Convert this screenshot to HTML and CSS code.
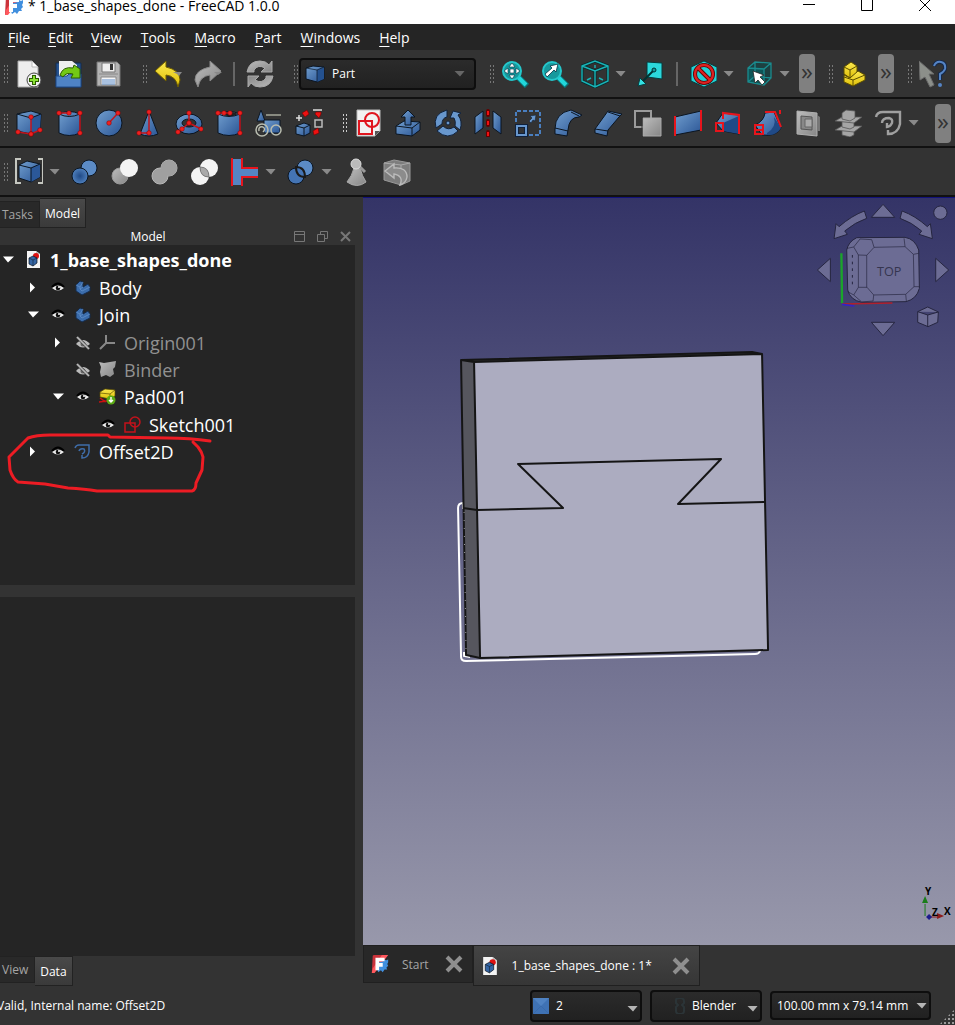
FILE: index.html
```html
<!DOCTYPE html>
<html lang="en">
<head>
    <meta charset="UTF-8">
    <meta name="viewport" content="width=device-width, initial-scale=1.0">
    <title>1_base_shapes_done - FreeCAD 1.0.0</title>
    <link rel="stylesheet" href="styles.css">
</head>
<body>
    <!-- shared gradients, markers and symbols -->
    <svg class="defs" width="0" height="0" aria-hidden="true">
        <defs>
            <linearGradient id="blue" x1="0" y1="0" x2="1" y2="1"><stop offset="0" stop-color="#729fcf"/><stop offset="1" stop-color="#2a5595"/></linearGradient>
            <linearGradient id="grey" x1="0" y1="0" x2="1" y2="1"><stop offset="0" stop-color="#bdbdbd"/><stop offset="1" stop-color="#868686"/></linearGradient>
            <radialGradient id="ball"><stop offset="0" stop-color="#204a87"/><stop offset="1" stop-color="#4f80bd"/></radialGradient>
            <linearGradient id="yellow" x1="0" y1="0" x2="0" y2="1"><stop offset="0" stop-color="#fce94f"/><stop offset="1" stop-color="#dfc009"/></linearGradient>
            <marker id="dot" markerUnits="userSpaceOnUse" markerWidth="6" markerHeight="6" refX="3" refY="3"><circle cx="3" cy="3" r="2.3" fill="#ef2020" stroke="#7a0000" stroke-width=".5"/></marker>
            <symbol id="logo" viewBox="0 0 20 22">
                <path d="M2 2Q2 1 4 1H18L15 6 4 20 1 21Z" fill="#cb333b"/>
                <path d="M12 1H19L4 21H1L2 16Z" fill="#ff585d"/>
                <path d="M9 9L14 8 15 6 17 7 19 6V9L18 11 19 13 17 15 18 17 15 17 13 20 11 18 8 20 7 17Z" fill="#418fde"/>
                <path d="M5 4H15V8H9V10H13V14H9V18H5Z" fill="#fff"/>
            </symbol>
            <symbol id="doc" viewBox="0 0 17 19">
                <path d="M2 1H11L15 4V18H2Z" fill="#f4f4f4"/><path d="M11 1V4H15Z" fill="#bbb"/>
                <circle cx="11" cy="6" r="3" fill="#d11"/><path d="M4 8L8 6 12 8V13L8 16 4 14Z" fill="#3465a4" stroke="#0b1521" stroke-width=".7"/><path d="M4 8L8 10 12 8M8 10V16" fill="none" stroke="#0b1521" stroke-width=".5"/>
            </symbol>
            <symbol id="eye" viewBox="0 0 16 14">
                <path d="M2 6Q8-1 14 6" fill="none" stroke="#000" stroke-width="2"/><path d="M2 7Q8 2 14 7 8 12 2 7Z" fill="#eee"/><circle cx="8" cy="7" r="2.3" fill="#111"/><circle cx="9" cy="6" r="1" fill="#fff"/>
            </symbol>
            <symbol id="eyeOff" viewBox="0 0 16 14">
                <path d="M1 8Q8 0 15 8 8 15 1 8Z" fill="#bbb"/><circle cx="8" cy="8" r="2.5" fill="#666"/><path d="M2 1L14 13" stroke="#444" stroke-width="3"/><path d="M2 1L14 13" stroke="#bbb" stroke-width="1.7"/>
            </symbol>
            <symbol id="body" viewBox="0 0 17 17">
                <path d="M2 6L6 2 9 3V8L14 5 16 8V12L8 16 2 12Z" fill="#3b6cab" stroke="#152c4c"/><path d="M2 6L6 8V10L9 8M6 10L8 12 16 8M6 8L9 3" fill="none" stroke="#6594cc" stroke-width=".7"/>
            </symbol>
            <symbol id="cross" viewBox="0 0 18 18"><path d="M2 2L16 16M16 2L2 16" stroke="#8f8f8f" stroke-width="4"/></symbol>
        </defs>
    </svg>

    <header class="titlebar">
        <svg class="app-logo" viewBox="0 6 20 16"><use href="#logo" width="20" height="22"/></svg>
        <span class="app-title">* 1_base_shapes_done - FreeCAD 1.0.0</span>
        <button class="win-btn" aria-label="Minimize"><svg viewBox="0 0 12 12"><path d="M0 4.5H12"/></svg></button>
        <button class="win-btn" aria-label="Maximize"><svg viewBox="0 0 12 12"><path d="M.5-1V10.5H11.5V-1"/></svg></button>
        <button class="win-btn" aria-label="Close"><svg viewBox="0 0 12 12"><path d="M0-1L12 11M12-1L0 11"/></svg></button>
    </header>

    <nav class="menubar">
        <a href="#"><u>F</u>ile</a>
        <a href="#"><u>E</u>dit</a>
        <a href="#"><u>V</u>iew</a>
        <a href="#"><u>T</u>ools</a>
        <a href="#"><u>M</u>acro</a>
        <a href="#"><u>P</u>art</a>
        <a href="#"><u>W</u>indows</a>
        <a href="#"><u>H</u>elp</a>
    </nav>

    <!-- file, workbench, view -->
    <div class="toolbar">
        <div class="group">
            <i class="grip"></i>
            <button class="tool" aria-label="New"><svg viewBox="0 0 28 28"><path d="M3 1H17L23 7V27H3Z" fill="#eee" stroke="#aaa"/><path d="M17 1V7H23Z" fill="#fff" stroke="#bbb"/><circle cx="19" cy="20" r="7" fill="#eee" stroke="#444"/><path d="M19 15V25M14 20H24" stroke="#2b5c00" stroke-width="4"/><path d="M19 16V24M15 20H23" stroke="#8ae234" stroke-width="2"/></svg></button>
            <button class="tool" aria-label="Open"><svg viewBox="0 0 28 28"><path d="M1 3H26V27H1Z" fill="#24518f" stroke="#152c4c"/><path d="M4 1H17L22 5V18H4Z" fill="#eee"/><path d="M1 16H12L14 14H26V27H1Z" fill="#4f83c4" stroke="#204a87"/><path d="M5 15Q8 6 18 8L19 5 25 9V18H16L18 14Q11 12 8 17Z" fill="#73c916" stroke="#2b5c00"/></svg></button>
            <button class="tool" aria-label="Save"><svg viewBox="0 0 28 28"><path d="M2 2H22L25 5V26H2Z" fill="#b4b4b4" stroke="#777"/><path d="M7 3H20V12H7Z" fill="#eee" stroke="#777"/><path d="M15 4H18V10H15Z" fill="#333"/><path d="M4 14H23" stroke="#888"/><path d="M6 17H21V25H6Z" fill="#f4f4f4" stroke="#888"/><path d="M7 20H20M7 22H20M7 24H20" stroke="#5e8fcc"/></svg></button>
        </div>
        <div class="group">
            <i class="grip"></i>
            <button class="tool" aria-label="Undo"><svg viewBox="0 0 28 28"><path d="M1 11L12 1V7Q26 10 26 20L24 27Q22 16 12 15V21Z" fill="url(#yellow)" stroke="#6d5c00"/><path d="M19 12H28L25 16 23 14Z" fill="#888"/></svg></button>
            <button class="tool" aria-label="Redo"><svg viewBox="0 0 28 28"><path d="M27 11L16 1V7Q1 10 1 20L4 27Q6 16 16 15V21Z" fill="url(#grey)" stroke="#888"/><path d="M20 12H28L24 15Z" fill="#888"/></svg></button>
            <i class="sep"></i>
            <button class="tool" aria-label="Refresh"><svg viewBox="0 0 28 28"><path id="ref" d="M1 12Q3 1 14 1 20 1 23 5L26 1V12H15L19 8Q12 4 8 10V12Z" fill="url(#grey)" stroke="#aaa"/><use href="#ref" transform="rotate(180 14 14)"/></svg></button>
        </div>
        <div class="group">
            <i class="grip"></i>
            <div class="combo workbench">
                <svg viewBox="0 0 20 18"><path d="M1 3L8 1 19 2V14L12 17 1 14Z" fill="url(#blue)" stroke="#0b1521"/><path d="M12 5L19 2V14L12 17Z" fill="#24518f"/><path d="M1 3L12 5V17M12 5L19 2" fill="none" stroke="#0b1521" stroke-width=".7"/></svg>
                <select aria-label="Workbench"><option>Part</option></select><i class="caret dim"></i>
            </div>
        </div>
        <div class="group">
            <i class="grip"></i>
            <button class="tool" aria-label="Fit all"><svg viewBox="0 0 28 28"><path d="M17 17L26 26" stroke="#06767a" stroke-width="6"/><path d="M17 17L25 25" stroke="#22d6da" stroke-width="4"/><circle cx="11" cy="11" r="9" fill="#17999d" stroke="#25c7cb" stroke-width="2"/><path d="M11 3L14 7H8ZM11 19L14 15H8ZM3 11L7 8V14ZM19 11L15 8V14ZM9 9H13V13H9Z" fill="#fff" stroke="#034" stroke-width=".6"/></svg></button>
            <button class="tool" aria-label="Fit selection"><svg viewBox="0 0 28 28"><path d="M17 17L26 26" stroke="#06767a" stroke-width="6"/><path d="M17 17L25 25" stroke="#22d6da" stroke-width="4"/><circle cx="11" cy="11" r="9" fill="#17999d" stroke="#25c7cb" stroke-width="2"/><path d="M4 14L11 8 9 6 17 4 15 12 13 10 6 17Z" fill="#fff" stroke="#034" stroke-width=".8"/></svg></button>
            <button class="tool" aria-label="Axonometric"><svg viewBox="0 0 28 28"><path d="M1 6L14 1 27 6V21L14 27 1 21ZM1 6L14 11 27 6M14 11V27" fill="none" stroke="#062d2e" stroke-width="3"/><path d="M1 6L14 1 27 6V21L14 27 1 21ZM1 6L14 11 27 6M14 11V27M14 5V8M6 20L10 18M22 20L18 18" fill="none" stroke="#1ab3b7" stroke-width="1.4"/></svg></button>
            <i class="caret"></i>
            <button class="tool" aria-label="Link navigation"><svg viewBox="0 0 28 28"><path d="M10 2L25 3V19L10 17Z" fill="#2bd8dc" stroke="#063b3d"/><path d="M17 10L6 21" stroke="#033" stroke-width="2"/><circle cx="17" cy="10" r="2" fill="#17999d" stroke="#033"/><path d="M1 26L3 18 9 24Z" fill="#34e0e2" stroke="#063b3d"/></svg></button>
            <i class="sep"></i>
            <button class="tool" aria-label="Draw style"><svg viewBox="0 0 28 28"><path d="M15 1L28 7V21L15 27 2 21V7Z" fill="#22d0d4" stroke="#063b3d"/><g fill="none" stroke="#5b0000" stroke-width="4"><circle cx="15" cy="14" r="9"/><path d="M9 8L21 20"/></g><g fill="none" stroke="#d22" stroke-width="2.4"><circle cx="15" cy="14" r="9"/><path d="M9 8L21 20"/></g></svg></button>
            <i class="caret"></i>
            <button class="tool" aria-label="Box selection"><svg viewBox="0 0 28 28"><path d="M3 8L10 2 26 3V18L19 25 3 22Z" fill="#1d4041"/><path d="M3 8H19V24L3 22Z" fill="#0e5557"/><path d="M3 8L10 2 26 3V18L19 25 3 22ZM3 8L19 9 26 3M19 9V25M10 2V16L3 22M10 16L26 18" fill="none" stroke="#1a8c8f" stroke-width="1.3"/><path d="M8 11L19 15 15 17 20 22 17 25 13 20 10 23Z" fill="#fff" stroke="#222" stroke-width=".8"/></svg></button>
            <i class="caret"></i>
            <button class="more" aria-label="More view tools">»</button>
        </div>
        <div class="group">
            <i class="grip"></i>
            <button class="tool" aria-label="Create part"><svg viewBox="0 0 28 28"><g fill="url(#yellow)" stroke="#5c4e00"><path d="M4 7L11 2 17 6V13L10 18 4 14Z"/><path d="M4 15L10 18 18 11 25 15V20L13 26 4 22Z"/><path d="M4 7L10 10 17 6M10 10V18M4 17L13 20 25 15M13 20V26" fill="none"/></g></svg></button>
            <button class="more" aria-label="More structure tools">»</button>
        </div>
        <div class="group">
            <i class="grip"></i>
            <button class="tool" aria-label="What's this"><svg viewBox="0 0 28 28"><path d="M0 1L15 14H10L15 25 11 27 6 17 1 20Z" fill="#8c8f8a" stroke="#6a6a6a"/><path d="M15 6Q17 1 22 2 27 3 26 9 25 12 21 14V20" fill="none" stroke="#16294a" stroke-width="4"/><path d="M15 6Q17 1 22 2 27 3 26 9 25 12 21 14V20" fill="none" stroke="#5584c5" stroke-width="2"/><circle cx="21" cy="25" r="2" fill="#5584c5"/></svg></button>
        </div>
    </div>

    <!-- solids and part tools -->
    <div class="toolbar">
        <div class="group">
            <i class="grip"></i>
            <button class="tool" aria-label="Box"><svg viewBox="0 0 28 28"><path class="b" d="M2 5L16 2 26 5 25 21 16 25 2 22Z"/><path d="M16 9L26 5 25 21 16 25Z" fill="#2b5899"/><path class="l" d="M2 5L16 9 26 5"/><path class="r" d="M3 23L16 25 25 21M16 25V8"/></svg></button>
            <button class="tool" aria-label="Cylinder"><svg viewBox="0 0 28 28"><path class="b" d="M4 5Q14 0 25 5V24Q14 29 4 24Z"/><path class="l" d="M4 5Q14 10 25 5"/><path class="r" d="M4 4H14M25 4V24"/></svg></button>
            <button class="tool" aria-label="Sphere"><svg viewBox="0 0 28 28"><circle cx="14" cy="14" r="13" fill="url(#blue)" stroke="#0b1521"/><path class="r" d="M14 14L23 4"/></svg></button>
            <button class="tool" aria-label="Cone"><svg viewBox="0 0 28 28"><path class="b" d="M14 2L23 25Q14 29 5 25Z"/><path class="r" d="M14 3V24H4"/></svg></button>
            <button class="tool" aria-label="Torus"><svg viewBox="0 0 28 28"><ellipse class="b" cx="14" cy="15" rx="13" ry="10"/><ellipse cx="14" cy="14" rx="7" ry="4" fill="#333" stroke="#0b1521"/><path class="r" d="M14 4V14L26 20M14 14L7 20 3 23"/></svg></button>
            <button class="tool" aria-label="Tube"><svg viewBox="0 0 28 28"><path class="b" d="M3 5Q14 0 25 5V24Q14 29 3 24Z"/><ellipse cx="15" cy="5" rx="7" ry="2" fill="#222"/><path class="l" d="M3 5Q14 10 25 5"/><path class="r" d="M3 4H9L15 4M25 4V24"/></svg></button>
            <button class="tool" aria-label="Primitives"><svg viewBox="0 0 28 28"><path class="b" d="M6 1L10 12H2Z"/><path d="M11 6H26" stroke="#888a80" stroke-width="2"/><path class="b" d="M9 11H25V24H9Z"/><g fill="none" stroke="#b9bdb0" stroke-width="1.5"><circle cx="7" cy="21" r="6"/><path d="M4 22Q3 17 8 18 11 20 8 23"/><circle cx="21" cy="21" r="5"/></g></svg></button>
            <button class="tool" aria-label="Shape builder"><svg viewBox="0 0 28 28"><path class="b" d="M1 17L9 14 15 16V24L9 27 1 25Z"/><path class="l" d="M1 17L9 19 15 16M9 19V27"/><path d="M4 6V12M1 9H7M18 1H27" stroke="#ddd" stroke-width="1.5"/><path d="M20 11H27V18H20Z" fill="#333" stroke="#bbb" stroke-width="1.5"/><path d="M7 4L12 1 14 5 10 8ZM21 3H26V5L24 9 20 5ZM18 22L23 19 24 24 19 26Z" fill="#e11" stroke="#700" stroke-width=".6"/></svg></button>
        </div>
        <div class="group">
            <i class="grip bright"></i>
            <button class="tool" aria-label="Sketch"><svg viewBox="0 0 28 28"><path d="M3 1H26V22L21 27H3Z" fill="#f2f2f2" stroke="#bbb"/><path d="M26 22H21V27Z" fill="#555"/><g fill="none" stroke="#e0161f" stroke-width="2"><path d="M5 12H18V25H5Z"/><circle cx="18" cy="11" r="7"/></g></svg></button>
            <button class="tool" aria-label="Extrude"><svg viewBox="0 0 28 28"><path class="b" d="M2 17L10 12 26 13V21L18 27 2 25Z"/><path class="l" d="M2 17L18 19 26 13M18 19V27"/><path class="b" d="M14 1L21 8H17V16H11V8H7Z"/></svg></button>
            <button class="tool" aria-label="Revolve"><svg viewBox="0 0 28 28"><path d="M13 1V8Q8 9 8 15L2 19Q-2 5 13 1ZM3 22L9 17Q14 22 20 18L24 22Q14 32 3 22ZM16 9L19 2 27 4 24 6Q29 12 26 21L21 17Q22 12 20 9Z" fill="#6897cd" stroke="#10213b"/><circle cx="14" cy="14" r="2" fill="#6897cd" stroke="#10213b"/></svg></button>
            <button class="tool" aria-label="Mirror"><svg viewBox="0 0 28 28"><path class="b" d="M1 8L9 2V19L1 25Z"/><path class="b" d="M19 2L27 8V25L19 19Z"/><path d="M14 2V6M14 12V16M14 23V27" stroke="#600" stroke-width="4" stroke-linecap="round"/><path d="M14 2V6M14 12V16M14 23V27" stroke="#e11" stroke-width="2"/></svg></button>
            <button class="tool" aria-label="Scale"><svg viewBox="0 0 28 28"><path d="M2 13V2H26V26H15" fill="none" stroke="#4a7fc0" stroke-width="2" stroke-dasharray="4 2"/><path d="M3 17H12V26H3Z" fill="none" stroke="#10213b" stroke-width="4"/><path d="M3 17H12V26H3Z" fill="none" stroke="#6897cd" stroke-width="2"/><path d="M15 12L18 9 16 7 22 6 21 12 19 11 17 14Z" fill="#6897cd" stroke="#10213b" stroke-width=".6"/></svg></button>
            <button class="tool" aria-label="Fillet"><svg viewBox="0 0 28 28"><path class="b" d="M1 20Q1 4 17 1L28 6 25 8Q15 8 14 21L13 27 1 25Z"/><path class="l" d="M1 19L14 22M17 3L25 7"/></svg></button>
            <button class="tool" aria-label="Chamfer"><svg viewBox="0 0 28 28"><path class="b" d="M1 20L14 2 28 5 25 8 14 21 13 27 1 24Z"/><path class="l" d="M1 20L14 22M14 3L26 7"/></svg></button>
            <button class="tool" aria-label="Face from wires"><svg viewBox="0 0 28 28"><path d="M1 2H17V18H1Z" fill="none" stroke="#9b9b9b" stroke-width="2"/><path d="M9 9H27V27H9Z" fill="url(#grey)" stroke="#aaa"/><path d="M8 8V27" stroke="#333"/></svg></button>
            <button class="tool" aria-label="Ruled surface"><svg viewBox="0 0 28 28"><path d="M1 8L27 2V21L1 26Z" fill="url(#blue)"/><path class="l" d="M1 8L27 2M1 26L27 21"/><path class="e" d="M1 7V27M27 1V22"/></svg></button>
            <button class="tool" aria-label="Loft"><svg viewBox="0 0 28 28"><path class="b" d="M2 14L9 4 25 6V25L9 22Z"/><path d="M9 14L25 7V25L9 22Z" fill="#204a87"/><path class="e" d="M9 10V4L25 6V25M2 14H9V22H2Z"/></svg></button>
            <button class="tool" aria-label="Sweep"><svg viewBox="0 0 28 28"><path class="b" d="M1 16Q10 12 11 4L20 3 27 19Q22 28 8 26Z"/><path d="M13 24Q23 18 20 8L27 19Q22 27 13 26Z" fill="#204a87"/><path class="e" d="M11 3L21 3 27 18M1 16H9V25H1ZM2 21H8M26 1V5"/></svg></button>
            <button class="tool" aria-label="Section"><svg viewBox="0 0 28 28"><path d="M3 2L23 4V27L3 25Z" fill="url(#grey)" stroke="#b0b0b0"/><path d="M23 6L26 8V22H23Z" fill="#777"/><path d="M7 7L18 8V21L7 20Z" fill="#888" stroke="#555"/><path d="M11 10H18V18H11Z" fill="#aaa" stroke="#666"/></svg></button>
            <button class="tool" aria-label="Cross sections"><svg viewBox="0 0 28 28"><g fill="#a5a5a5" stroke="#555" stroke-width=".8"><path d="M8 21H20V26L16 28 8 26Z"/><path d="M1 21L8 17H28L20 23Z"/><path d="M8 12H20V18L16 20 8 18Z"/><path d="M1 12L8 8H28L20 14Z"/><path d="M8 4L12 1 21 2V9L16 12 8 10Z"/></g></svg></button>
            <button class="tool" aria-label="Offset"><svg viewBox="0 0 28 28"><g fill="none" stroke="#a0a0a0" stroke-width="2.4"><path d="M2 8Q3 3 9 3H26V15Q24 25 14 25V21"/><path d="M8 14Q8 9 15 9 19 10 18 14 16 18 13 18V14"/></g></svg></button>
            <i class="caret"></i>
        </div>
        <button class="more last" aria-label="More part tools">»</button>
    </div>

    <!-- boolean -->
    <div class="toolbar">
        <div class="group">
            <i class="grip"></i>
            <button class="tool" aria-label="Compound"><svg viewBox="0 0 28 28"><path class="b" d="M4 7L12 3 25 6V19L16 24 4 20Z"/><path d="M16 10L25 6V19L16 24Z" fill="#2b5899"/><path class="l" d="M4 7L16 10 25 6M16 10V24"/><path d="M6 1H1V25H6M23 1H28V25H23" fill="none" stroke="#c5c7c0" stroke-width="2"/></svg></button>
            <i class="caret"></i>
            <button class="tool" aria-label="Boolean"><svg viewBox="0 0 28 28"><circle cx="18" cy="10" r="8" fill="#5b8bc6" stroke="#0b1521"/><circle cx="9" cy="18" r="8" fill="url(#ball)" stroke="#0b1521"/></svg></button>
            <button class="tool" aria-label="Cut"><svg viewBox="0 0 28 28"><circle cx="9" cy="18" r="8" fill="url(#grey)" stroke="#999"/><circle cx="18" cy="10" r="9" fill="#f4f4f4"/></svg></button>
            <button class="tool" aria-label="Union"><svg viewBox="0 0 28 28"><g fill="#a0a0a0" stroke="#b8b8b8"><circle cx="18" cy="10" r="8"/><circle cx="9" cy="18" r="8"/></g><circle cx="18" cy="10" r="8" fill="#a0a0a0"/></svg></button>
            <button class="tool" aria-label="Intersection"><svg viewBox="0 0 28 28"><circle cx="18" cy="10" r="9" fill="#f4f4f4"/><circle cx="9" cy="18" r="9" fill="#f4f4f4"/><path d="M9 9Q18 9 18 19 9 19 9 9Z" fill="#aaa" stroke="#777"/></svg></button>
            <button class="tool" aria-label="Join"><svg viewBox="0 0 28 28"><path d="M1 1H11V27H1ZM11 10H27V19H11Z" fill="#5585c3"/><path class="e" d="M1 0V28M11 0V10H27M11 28V19H27"/></svg></button>
            <i class="caret"></i>
            <button class="tool" aria-label="Split"><svg viewBox="0 0 28 28"><g stroke="#0b1521"><circle cx="18" cy="10" r="8" fill="#5b8bc6"/><circle cx="9" cy="18" r="8" fill="#4474b4"/></g><path d="M9 9Q18 9 18 19 9 19 9 9Z" fill="#4474b4" stroke="#1a1a1a" stroke-width="2"/></svg></button>
            <i class="caret"></i>
            <button class="tool" aria-label="Check geometry"><svg viewBox="0 0 28 28"><path d="M11 10H17Q19 18 23 24 14 31 4 24 9 18 11 10Z" fill="url(#grey)" stroke="#aaa"/><path d="M17 9L22 14" stroke="#999" stroke-width="3"/><circle cx="13" cy="6" r="5" fill="#bbb" stroke="#ddd"/></svg></button>
            <button class="tool" aria-label="Defeaturing"><svg viewBox="0 0 28 28"><path d="M1 5L11 2 27 5V23L18 27 1 22Z" fill="#7d7d7d" stroke="#999"/><path d="M1 5L18 7 27 5M18 7V12" fill="none" stroke="#aaa"/><path d="M2 13L11 6V10Q24 9 24 19 23 25 17 27 21 18 11 16V20Z" fill="#8c8c8c" stroke="#bbb" stroke-width="1.4"/></svg></button>
        </div>
    </div>

    <main class="workspace">
        <aside class="dock">
            <div class="tabs">
                <button class="tab">Tasks</button>
                <button class="tab active">Model</button>
            </div>
            <div class="dock-title">
                <span>Model</span>
                <button aria-label="Collapse"><svg viewBox="0 0 11 11"><path d="M.5.5H10.5V10.5H.5ZM1 3.5H10"/></svg></button>
                <button aria-label="Float"><svg viewBox="0 0 11 11"><path d="M3.5 3.5V.5H10.5V7.5H7M.5 3.5H7.5V10.5H.5Z"/></svg></button>
                <button aria-label="Close panel"><svg viewBox="0 0 11 11"><path d="M1 1L10 10M10 1L1 10" stroke-width="2"/></svg></button>
            </div>
            <div class="tree">
                <div class="row"><i class="twisty open"></i><svg class="file" viewBox="0 0 17 19"><use href="#doc"/></svg><b>1_base_shapes_done</b></div>
                <ul>
                    <li><div class="row"><i class="twisty"></i><svg class="eye"><use href="#eye"/></svg><svg><use href="#body"/></svg><span>Body</span></div></li>
                    <li>
                        <div class="row"><i class="twisty open"></i><svg class="eye"><use href="#eye"/></svg><svg><use href="#body"/></svg><span>Join</span></div>
                        <ul>
                            <li><div class="row hidden"><i class="twisty"></i><svg class="eye"><use href="#eyeOff"/></svg><svg viewBox="0 0 17 17"><path d="M7 1V9L1 15M7 9H16" fill="none" stroke="#888" stroke-width="2"/></svg><span>Origin001</span></div></li>
                            <li><div class="row hidden"><i class="twisty none"></i><svg class="eye"><use href="#eyeOff"/></svg><svg viewBox="0 0 17 17"><path d="M0 1L5 2 11 1 17 0 16 6 14 8 15 13 11 16 7 14 2 16 1 11 2 6Z" fill="url(#grey)"/></svg><span>Binder</span></div></li>
                            <li>
                                <div class="row"><i class="twisty open"></i><svg class="eye"><use href="#eye"/></svg><svg viewBox="0 0 17 17"><path d="M1 10L7 14M0 14L8 13" stroke="#c11" stroke-width="1.5"/><path d="M1 4L6 1 16 2V8L11 11 1 9Z" fill="url(#yellow)" stroke="#5c4e00" stroke-width=".7"/><path d="M1 5L11 6 16 2M11 6V10" fill="none" stroke="#5c4e00" stroke-width=".7"/><circle cx="12" cy="12" r="4.5" fill="#5aaa14"/><path d="M12 9V14M10 12L12 14 14 12" fill="none" stroke="#fff" stroke-width="1.4"/></svg><span>Pad001</span></div>
                                <ul>
                                    <li><div class="row"><i class="twisty none"></i><svg class="eye"><use href="#eye"/></svg><svg viewBox="0 0 17 17"><g fill="none" stroke="#c3121b" stroke-width="1.5"><path d="M1 7H11V16H1Z"/><circle cx="11" cy="6" r="5"/></g></svg><span>Sketch001</span></div></li>
                                </ul>
                            </li>
                        </ul>
                    </li>
                    <li><div class="row"><i class="twisty"></i><svg class="eye"><use href="#eye"/></svg><svg viewBox="0 0 17 17"><g fill="none" stroke="#3f6da9" stroke-width="1.5"><path d="M1 5Q2 2 5 2H15V9Q14 15 8 15V12"/><path d="M5 8Q6 5 10 6 12 9 8 11"/></g></svg><span>Offset2D</span></div></li>
                </ul>
                <svg class="markup" viewBox="0 245 240 260"><path d="M210 441Q190 438 167 438L110 437 108 435H50Q36 435 28 438L9 457 10 470Q13 479 18 482L45 484 68 488Q85 489 97 491H192Q196 490 196 483L202 470 203 457Q202 452 198 447L193 442"/></svg>
            </div>
            <div class="splitter"></div>
            <div class="properties"></div>
            <div class="tabs bottom">
                <button class="tab">View</button>
                <button class="tab active">Data</button>
            </div>
        </aside>

        <section class="mdi">
            <div class="view3d">
                <svg viewBox="363 198 592 747" preserveAspectRatio="xMidYMin meet">
                    <!-- offset outline behind the part -->
                    <path d="M463 503Q458 503 458 508L461 657Q461 661 466 661L755 654Q759 654 760 651M463 509V504M464 652V656L470 657" fill="none" stroke="#fff" stroke-width="2"/>
                    <path d="M461 360L752 352 762 354 474 362Z" fill="#333"/>
                    <path d="M461 360L474 362 480 658 466 655Z" fill="#56565e"/>
                    <path d="M474 362L762 354 768 650 480 658Z" fill="#acacc0"/>
                    <path d="M461 360L752 352 762 354 768 650 480 658 466 655ZM461 360L474 362 762 354M474 362L480 658M463 508L477 510 563 508 518 464 721 459 678 504 765 502" fill="none" stroke="#151515" stroke-width="2" stroke-linejoin="round"/>
                    <path d="M464 512L466 654" stroke="#999" stroke-width="1" stroke-dasharray="1 7"/>
                    <!-- navigation cube -->
                    <g transform="translate(805 195) scale(.3333)" fill="#6c6c94" stroke="#25253f" stroke-width="3" stroke-linejoin="round">
                        <path d="M234 28L269 67H199ZM234 422L269 382H199ZM37 225L76 190V260ZM431 225L392 190V260Z"/>
                        <path d="M178 48L185 70Q150 82 119 108L127 118 87 131 93 86 102 95Q140 62 178 48Z"/>
                        <path d="M291 48L285 70Q320 82 350 108L342 118 382 131 376 86 367 95Q330 62 291 48Z"/>
                        <circle cx="406" cy="53" r="20"/>
                        <path d="M368 336L400 351 398 382 369 395 338 382V350ZM338 350L368 360 400 351M368 360V395"/>
                        <path d="M125 165Q130 140 155 128L300 127Q330 132 341 165L343 280Q335 312 303 320L170 322Q135 315 128 285Z"/>
                        <path d="M160 180L185 181 207 157 300 155 325 178 327 275 302 298 206 300 186 277H160M160 180L146 156 127 160M146 156L165 132 200 134 207 157M160 180V277L146 300 128 290M146 300L170 321 204 318 206 300M300 155L297 130M325 178L341 175M327 275L342 275M302 298L304 319M185 181V277" fill="none" stroke-width="2"/>
                        <path d="M142 180V275" fill="none" stroke-dasharray="8 12"/>
                        <text x="216" y="242" font-size="38" fill="#35354f" stroke="none">TOP</text>
                        <path d="M109 175L111 325" stroke="#1ba52b" stroke-width="7"/><path d="M111 327L262 324" stroke="#b0202c" stroke-width="5"/><path d="M111 328L148 333" stroke="#3323c8" stroke-width="5"/>
                    </g>
                    <!-- axis cross -->
                    <g font-size="10" font-weight="bold">
                        <path d="M925 916V904" stroke="#1a7d1a"/><path d="M925 896L928 903H922Z" fill="#1a7d1a"/>
                        <path d="M929 917H937" stroke="#8c1c1c"/><path d="M944 916L937 913V919Z" fill="#8c1c1c"/>
                        <path d="M929 914L932 917 929 920 926 917Z" fill="#1c1c8c"/>
                        <text x="925" y="895">Y</text><text x="932" y="916">Z</text><text x="944" y="915">X</text>
                    </g>
                </svg>
            </div>
            <div class="doc-tabs">
                <div class="doc-tab"><svg class="doc-icon" viewBox="0 0 20 22"><use href="#logo"/></svg><span>Start</span><button aria-label="Close Start"><svg><use href="#cross"/></svg></button></div>
                <div class="doc-tab active"><svg class="doc-icon" viewBox="0 0 17 19"><use href="#doc"/></svg><span>1_base_shapes_done : 1*</span><button aria-label="Close document"><svg><use href="#cross"/></svg></button></div>
            </div>
        </section>
    </main>

    <footer class="statusbar">
        <span class="message">Valid, Internal name: Offset2D</span>
        <div class="combo notify">
            <svg viewBox="0 0 16 16"><path d="M0 0H16V16H0Z" fill="#3f72b4"/><path d="M0 0L8 8 16 0Z" fill="#4f82c2"/><path d="M0 16L8 8 16 16" fill="none" stroke="#396aab"/></svg>
            <select aria-label="Notifications"><option>2</option></select><i class="caret low"></i>
        </div>
        <div class="combo nav-style">
            <svg viewBox="0 0 16 16"><path d="M4 2Q4 0 8 0T12 3V5L10 7 12 9V13Q12 16 8 16T4 13V9L6 7 4 5Z" fill="none" stroke="#2b3437" stroke-width="2"/></svg>
            <select aria-label="Navigation style"><option>Blender</option></select><i class="caret low"></i>
        </div>
        <button class="combo size">100.00 mm x 79.14 mm<i class="caret"></i></button>
        <i class="resize"></i>
    </footer>
</body>
</html>
```
FILE: styles.css
```css
* {
    box-sizing: border-box;
}
body {
    margin: 0;
    height: 100vh;
    display: flex;
    flex-direction: column;
    overflow: hidden;
    background: #333;
    color: #fff;
    font-family: "Open Sans", "Noto Sans", sans-serif;
    font-size: 12px;
}
button, select {
    font: inherit;
    color: inherit;
    background: none;
    border: none;
    padding: 0;
    margin: 0;
}
svg {
    display: block;
    flex: none;
}
.defs {
    position: absolute;
}

/* title bar and menu */
.titlebar {
    display: flex;
    height: 24px;
    padding-right: 1px;
    background: #fff;
    color: #000;
}
.app-logo {
    width: 20px;
    height: 16px;
    margin: 0 4px;
}
.app-title {
    flex: 1;
    font-size: 14px;
    line-height: 12px;
    white-space: nowrap;
}
.win-btn {
    width: 58px;
    display: flex;
    justify-content: center;
}
.win-btn svg {
    width: 12px;
    height: 12px;
    fill: none;
    stroke: #000;
}
.menubar {
    display: flex;
    gap: 18px;
    height: 26px;
    padding: 0 8px;
    align-items: center;
    background: #252525;
    font-size: 14px;
}
.menubar a {
    color: #fff;
    text-decoration: none;
}
.menubar a:nth-child(n+4) {
    padding-left: 1px;
}
.menubar u {
    text-underline-offset: 3px;
}

/* toolbars */
.toolbar {
    display: flex;
    gap: 10px;
    padding: 5px 0;
    background: #333;
    border-bottom: 2px solid #111;
    height: 49px;
}
.group {
    display: flex;
    align-items: center;
    flex: none;
}
.grip {
    width: 9px;
    height: 20px;
    flex: none;
    background: radial-gradient(circle, #777 1px, transparent 1px) 0 0 / 3px 4px;
    background-clip: content-box;
    padding: 0 1px 0 2px;
}
.grip.bright {
    background: radial-gradient(circle, #ccc 1px, transparent 1px) 0 0 / 3px 4px;
    background-clip: content-box;
}
.tool {
    width: 40px;
    height: 28px;
    padding: 0 6px;
}
.tool svg {
    width: 28px;
    height: 28px;
}
.sep {
    width: 12px;
    height: 24px;
    background: linear-gradient(#666, #666) center / 2px 100% no-repeat;
}
.caret {
    width: 16px;
    height: 6px;
    flex: none;
    background: #8a8a8a;
    clip-path: polygon(0 0, 11px 0, 6px 6px);
}
.more {
    width: 16px;
    height: 39px;
    margin-left: 4px;
    border-radius: 4px;
    background: #808080;
    color: #333;
    font-size: 24px;
    line-height: 30px;
    padding-bottom: 6px;
    display: flex;
    align-items: center;
    justify-content: center;
}
.more.last {
    margin: 0 4px 0 auto;
}
.b {
    fill: url(#blue);
    stroke: #0b1521;
}
.l {
    fill: none;
    stroke: #0b1521;
}
.e {
    fill: none;
    stroke: #e8141c;
    stroke-width: 2;
}
.r {
    fill: none;
    stroke: #c4141c;
    stroke-width: 1.5;
    marker-start: url(#dot);
    marker-mid: url(#dot);
    marker-end: url(#dot);
}

/* drop-downs */
.combo {
    display: flex;
    align-items: center;
    border: 2px solid #0e0e0e;
    border-radius: 4px;
    background: linear-gradient(#2b2b2b, #212121);
}
.combo select {
    flex: 1;
    min-width: 0;
    appearance: none;
    outline: none;
}
.workbench {
    width: 177px;
    height: 32px;
    padding: 0 4px;
    gap: 7px;
}
.workbench svg {
    width: 20px;
    height: 18px;
}
.caret.dim {
    background: #666;
}

/* left dock */
.workspace {
    flex: 1;
    display: flex;
    min-height: 0;
}
.dock {
    flex: 0 0 38%;
    display: flex;
    flex-direction: column;
    padding-right: 8px;
}
.tabs {
    display: flex;
    height: 31px;
    align-items: flex-end;
}
.tab {
    height: 27px;
    padding: 0 6px 0 2px;
    background: #292929;
    border: 1px solid #222;
    border-left: none;
    color: #a5a5a5;
}
.tab.active {
    height: 30px;
    padding: 0 5px;
    background: linear-gradient(#494949, #3a3a3a);
    color: #fff;
}
.tabs.bottom {
    align-items: flex-start;
    height: 30px;
}
.dock-title {
    display: flex;
    align-items: center;
    height: 17px;
    gap: 12px;
    padding: 0 4px 0 14px;
}
.dock-title span {
    flex: 1;
    text-align: center;
}
.dock-title svg {
    width: 11px;
    height: 11px;
    fill: none;
    stroke: #777;
}
.tree, .properties {
    background: #252525;
}
.tree {
    flex: 339 1 0;
    position: relative;
    padding-top: 1px;
    font-size: 18px;
}
.splitter {
    height: 12px;
}
.properties {
    flex: 359 1 0;
}
.tree ul {
    list-style: none;
    margin: 0;
    padding: 1px 0 0 25px;
}
.row {
    display: flex;
    align-items: center;
    gap: 8px;
    height: 27px;
    white-space: nowrap;
}
.row svg {
    width: 17px;
    height: 17px;
}
.row svg.file {
    height: 19px;
}
.row svg.eye {
    width: 16px;
    height: 14px;
}
.row.hidden {
    color: #919191;
}
.twisty {
    width: 17px;
    height: 12px;
    background: #fff;
    clip-path: polygon(5px 1px, 10px 6px, 5px 11px);
}
.twisty.open {
    clip-path: polygon(3px 3px, 14px 3px, 8px 9px);
}
.twisty.none {
    visibility: hidden;
}
.markup {
    position: absolute;
    left: 0;
    top: 0;
    width: 240px;
    height: 260px;
    fill: none;
    stroke: #ed1c24;
    stroke-width: 3;
    stroke-linecap: round;
    stroke-linejoin: round;
    pointer-events: none;
}

/* 3D view and document tabs */
.mdi {
    flex: 1;
    display: flex;
    flex-direction: column;
    min-width: 0;
}
.view3d {
    flex: 1;
    min-height: 0;
    border-top: 1px solid #12127a;
    background: linear-gradient(#343467, #9898ab);
}
.view3d svg {
    width: 100%;
    height: 100%;
}
.doc-tabs {
    display: flex;
    align-items: flex-start;
    height: 41px;
}
.doc-tab {
    display: flex;
    align-items: center;
    height: 38px;
    padding: 0 9px 0 6px;
    background: #282828;
    border: 1px solid #202020;
    color: #a5a5a5;
}
.doc-tab.active {
    height: 41px;
    background: linear-gradient(#444, #363636);
    color: #fff;
}
.doc-tab span {
    margin: 0 16px 0 12px;
    white-space: nowrap;
}
.doc-tab.active span {
    margin-right: 20px;
}
.doc-icon {
    width: 20px;
    height: 20px;
}
.doc-tab button svg {
    width: 18px;
    height: 18px;
}

/* status bar */
.statusbar {
    display: flex;
    align-items: center;
    height: 39px;
    gap: 8px;
    white-space: nowrap;
}
.message {
    flex: 1;
    margin-left: -3px;
}
.statusbar .combo {
    height: 32px;
    width: 112px;
    padding-left: 1px;
}
.statusbar .combo svg {
    width: 16px;
    height: 16px;
}
.notify {
    gap: 7px;
}
.statusbar .nav-style {
    padding-left: 20px;
    gap: 4px;
}
.statusbar .caret {
    width: 11px;
    margin-right: 2px;
    background: #b5b5b5;
}
.statusbar .caret.low {
    margin-top: 6px;
}
.statusbar .size {
    width: 161px;
    height: 29px;
    padding-left: 5px;
    justify-content: space-between;
}
.resize {
    align-self: flex-end;
    width: 16px;
    height: 16px;
    background: radial-gradient(circle, #999 1px, transparent 1px) 0 0 / 4px 4px;
    clip-path: polygon(100% 0, 100% 100%, 0 100%);
}
```
